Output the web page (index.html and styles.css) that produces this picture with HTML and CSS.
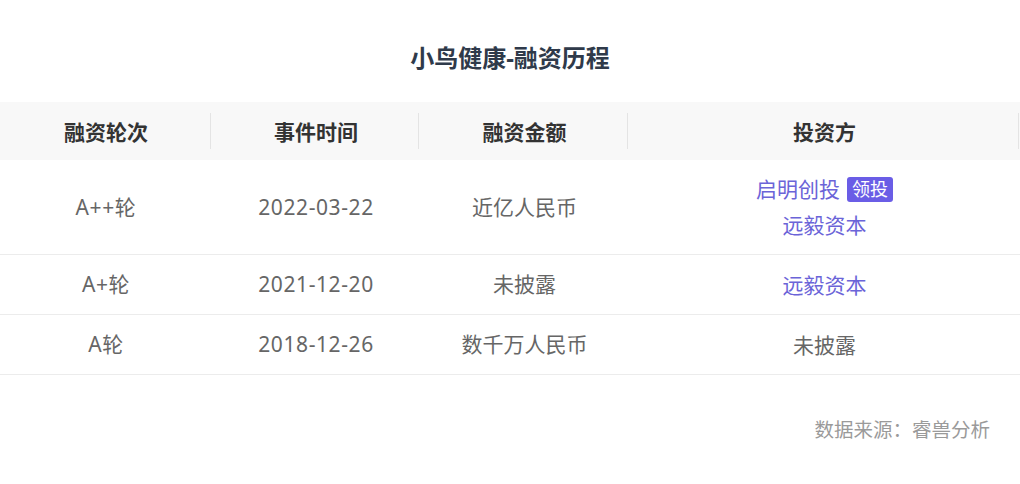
FILE: index.html
```html
<!DOCTYPE html>
<html lang="zh-CN">
<head>
<meta charset="utf-8">
<link rel="stylesheet" href="styles.css">
</head>
<body>
<div class="page">
  <h1 class="title">小鸟健康-融资历程</h1>
  <table class="fin-table">
    <colgroup>
      <col class="c1"><col class="c2"><col class="c3"><col class="c4">
    </colgroup>
    <thead>
      <tr><th>融资轮次</th><th>事件时间</th><th>融资金额</th><th>投资方</th></tr>
    </thead>
    <tbody>
      <tr>
        <td class="num">A++轮</td>
        <td class="num">2022-03-22</td>
        <td>近亿人民币</td>
        <td class="inv">
          <div class="inv-line"><span class="link">启明创投</span><span class="tag">领投</span></div>
          <div class="inv-line"><span class="link">远毅资本</span></div>
        </td>
      </tr>
      <tr>
        <td class="num">A+轮</td>
        <td class="num">2021-12-20</td>
        <td>未披露</td>
        <td class="inv"><div class="inv-line"><span class="link">远毅资本</span></div></td>
      </tr>
      <tr>
        <td class="num">A轮</td>
        <td class="num">2018-12-26</td>
        <td>数千万人民币</td>
        <td class="inv"><div class="inv-line">未披露</div></td>
      </tr>
    </tbody>
  </table>
  <div class="source">数据来源：睿兽分析</div>
</div>
</body>
</html>
```
FILE: styles.css
```css
html, body {
  margin: 0;
  padding: 0;
  background: #ffffff;
}
.page {
  width: 1020px;
  font-family: "Noto Sans", "Noto Sans CJK SC", sans-serif;
}
.title {
  margin: 0;
  padding-top: 41px;
  height: 61px;
  line-height: 34px;
  font-size: 24px;
  font-weight: 700;
  text-align: center;
  color: #2f3a4a;
}
.fin-table {
  width: 1020px;
  border-collapse: collapse;
  table-layout: fixed;
}
.c1 { width: 212px; }
.c2 { width: 208px; }
.c3 { width: 209px; }
.c4 { width: 391px; }
.fin-table th {
  height: 58px;
  padding: 0;
  font-size: 21px;
  font-weight: 700;
  color: #333333;
  text-align: center;
  background: linear-gradient(#e4e4e4, #e4e4e4) no-repeat right 1px center / 1px 36px, #f8f8f8;
}
.fin-table td {
  padding: 11px 0;
  line-height: 37px;
  font-size: 21px;
  color: #666666;
  text-align: center;
  vertical-align: middle;
  border-bottom: 1px solid #ececec;
}
.fin-table td.num {
  letter-spacing: 0.6px;
}
.inv-line {
  line-height: 36px;
  display: flex;
  justify-content: center;
  align-items: center;
  gap: 7px;
}
.link {
  color: #6b64d8;
}
.tag {
  display: inline-block;
  background: #6a5de6;
  color: #ffffff;
  font-size: 18px;
  line-height: 25px;
  padding: 0 5px;
  border-radius: 3px;
}
.source {
  margin-top: 40px;
  padding-right: 30px;
  text-align: right;
  line-height: 30px;
  font-size: 19.5px;
  color: #9a9a9a;
}
```
